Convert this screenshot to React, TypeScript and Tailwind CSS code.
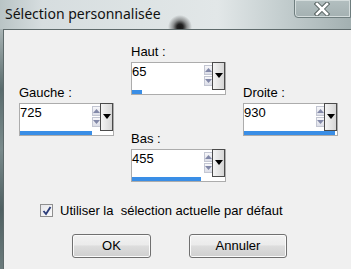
import React from "react";

type FieldProps = { label: string; value: string; pct: number };

function SpinArrow({ up }: { up?: boolean }) {
  return (
    <div className="w-[9px] h-[10px] border border-[#c3c6d2] bg-[linear-gradient(180deg,#f7f7fa,#dcdee8)] flex items-center justify-center">
      <svg width="7" height="4" viewBox="0 0 7 4" aria-hidden="true">
        <path d={up ? "M3.5 0 L7 4 L0 4 Z" : "M0 0 L7 0 L3.5 4 Z"} fill="#8288a8" />
      </svg>
    </div>
  );
}

function Field({ label, value, pct }: FieldProps) {
  return (
    <div className="flex flex-col w-[95px]">
      <span className="h-[15px] leading-[15px] text-[13px] mb-[3px] text-black">{label}</span>
      <div className="border border-[#acacac] bg-white flex flex-col h-[33px]">
        <div className="flex h-[27px]">
          <div className="flex-1 pt-[1px] text-[13px] leading-[15px] text-black">{value}</div>
          {/* spin buttons */}
          <div className="flex flex-col gap-[1px] pt-[2px] mr-[-1px]">
            <SpinArrow up />
            <SpinArrow />
          </div>
          {/* dropdown */}
          <div className="w-[13px] h-[28px] -mt-[1px] border border-[#4b4b4b] bg-[linear-gradient(90deg,#f4f4f4,#d6d6d6)] flex items-start justify-center pt-[10px]">
            <svg width="8" height="5" viewBox="0 0 8 5" aria-hidden="true">
              <path d="M0 0 L8 0 L4 5 Z" fill="#000" />
            </svg>
          </div>
        </div>
        <div className="h-[4px] bg-white">
          <div className="h-full bg-[#3a8ee6]" style={{ width: `${pct}%` }} />
        </div>
      </div>
    </div>
  );
}

function Button({ children, width }: { children: React.ReactNode; width: string }) {
  return (
    <button
      className={`${width} h-[24px] rounded-[3px] border border-[#707070] bg-[linear-gradient(180deg,#f2f2f2_0%,#ebebeb_45%,#dddddd_50%,#cfcfcf_100%)] text-[13px] text-black shadow-[inset_0_0_0_1px_#fbfbfb]`}
    >
      {children}
    </button>
  );
}

export default function App() {
  return (
    <div className="w-[351px] h-[269px] overflow-hidden flex flex-col font-['Liberation_Sans',Arial,sans-serif]">
      {/* Title bar */}
      <div className="h-[29px] flex items-start justify-between bg-[radial-gradient(circle_at_180px_27px,#151515_0,#222_3px,rgba(60,60,60,0.5)_7px,transparent_12px),linear-gradient(90deg,#b9c4c5_0%,#d6dddf_12%,#dde3e4_40%,#e2e7e8_62%,#c4cecf_80%,#a3b0b1_100%)]">
        <span className="ml-[5px] mt-[4px] text-[14px] leading-[20px] text-[#111] font-['Noto_Sans',sans-serif]">
          Sélection personnalisée
        </span>
        <div className="w-[57px] h-[19px] -mt-[1px] border border-[#6f7e7f] rounded-bl-[4px] shadow-[inset_0_0_0_1px_#d5dddd] bg-[linear-gradient(180deg,#b3bfc0,#a4b1b2)] flex items-center justify-center pr-[2px]">
          <svg width="16" height="14" viewBox="0 0 16 14" aria-hidden="true">
            <path d="M3 2 L13 12 M13 2 L3 12" stroke="#55605f" strokeWidth="4.5" strokeLinecap="square" />
            <path d="M3 2 L13 12 M13 2 L3 12" stroke="#ffffff" strokeWidth="2.6" strokeLinecap="square" />
          </svg>
        </div>
      </div>

      {/* Body */}
      <div className="flex-1 flex">
        <div className="w-[3px] bg-[linear-gradient(180deg,#a9b4b5_0%,#5a6c6d_25%,#7a8b8c_50%,#4f6062_75%,#6b7b7c_100%)]" />
        <div className="flex-1 bg-[#f0f0f0] border-l border-t border-[#5e6a6b] flex flex-col">
          <div className="flex gap-[17px] pl-[15px] pt-[14px]">
            <div className="mt-[41px]">
              <Field label="Gauche :" value="725" pct={77} />
            </div>
            <div className="flex flex-col gap-[36px]">
              <Field label="Haut :" value="65" pct={11} />
              <Field label="Bas :" value="455" pct={74} />
            </div>
            <div className="mt-[41px]">
              <Field label="Droite :" value="930" pct={98} />
            </div>
          </div>

          <label className="flex items-center gap-[7px] ml-[36px] mt-[21px] text-[13px] leading-[15px] text-black">
            <span className="w-[13px] h-[13px] border border-[#8f8f8f] bg-[linear-gradient(135deg,#e6e6ea,#fafafa)] flex items-center justify-center">
              <svg width="10" height="10" viewBox="0 0 10 10" aria-hidden="true">
                <path d="M1.5 5 L4 8 L8.5 1" fill="none" stroke="#2c3d7a" strokeWidth="1.9" />
              </svg>
            </span>
            <span>Utiliser la&nbsp; sélection actuelle par défaut</span>
          </label>

          <div className="flex gap-[38px] ml-[68px] mt-[16px]">
            <Button width="w-[79px]">OK</Button>
            <Button width="w-[98px]">Annuler</Button>
          </div>
        </div>
      </div>
    </div>
  );
}
